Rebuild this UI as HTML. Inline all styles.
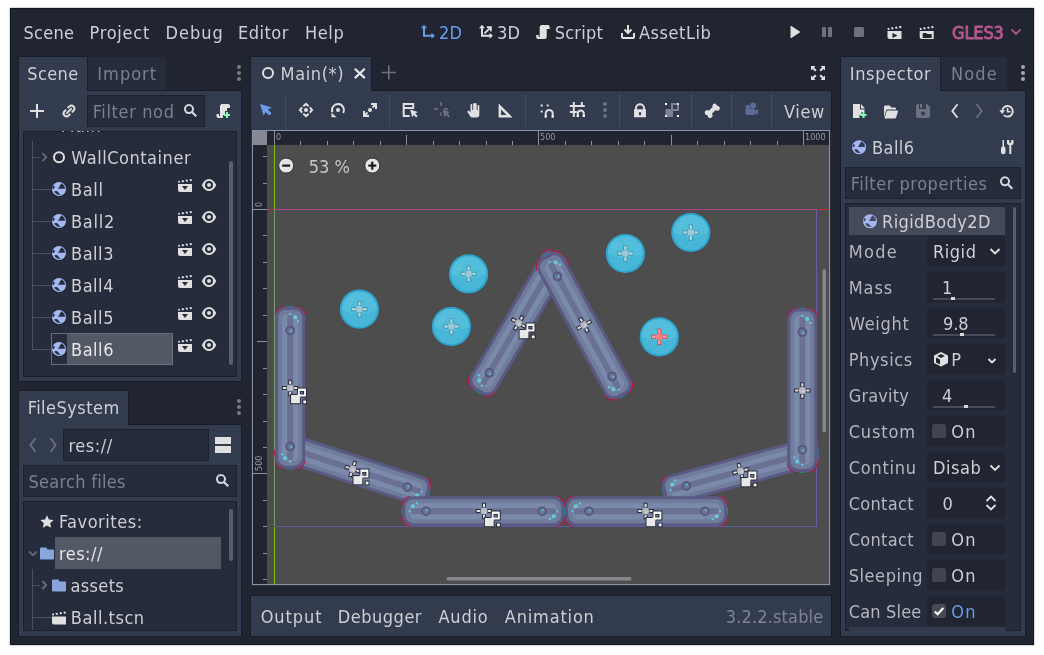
<!DOCTYPE html>
<html><head><meta charset="utf-8"><title>Godot Engine - Main</title>
<style>
html,body{margin:0;padding:0;background:#fff;}
body{width:1044px;height:655px;position:relative;overflow:hidden;font-family:"DejaVu Sans Condensed","DejaVu Sans","Liberation Sans",sans-serif;font-stretch:condensed;}
div,span.t,svg{position:absolute;}
span.t{white-space:pre;line-height:24px;height:24px;}
</style></head><body>
<div id="root" style="left:0;top:0;width:1044px;height:655px;will-change:transform;">
<div style="left:10px;top:8px;width:1024px;height:637px;background:#202531;box-shadow:0 0 1.5px rgba(10,12,20,.55), inset 0 0 0 1px rgba(8,10,22,.55);"></div>
<span class="t" id="t0" style="left:23.5px;top:21.00px;font-size:18px;color:#cdcfd4;letter-spacing:0.300px;">Scene</span>
<span class="t" id="t1" style="left:89.5px;top:21.00px;font-size:18px;color:#cdcfd4;letter-spacing:0.750px;">Project</span>
<span class="t" id="t2" style="left:165.5px;top:21.00px;font-size:18px;color:#cdcfd4;letter-spacing:0.975px;">Debug</span>
<span class="t" id="t3" style="left:238px;top:21.00px;font-size:18px;color:#cdcfd4;letter-spacing:0.480px;">Editor</span>
<span class="t" id="t4" style="left:305px;top:21.00px;font-size:18px;color:#cdcfd4;letter-spacing:0.600px;">Help</span>
<span class="t" id="t5" style="left:439px;top:21.00px;font-size:18px;color:#699ce8;letter-spacing:0.120px;">2D</span>
<span class="t" id="t6" style="left:497px;top:21.00px;font-size:18px;color:#cdcfd4;letter-spacing:0.300px;">3D</span>
<span class="t" id="t7" style="left:554.8px;top:21.00px;font-size:18px;color:#cdcfd4;letter-spacing:0.192px;">Script</span>
<span class="t" id="t8" style="left:639px;top:21.00px;font-size:18px;color:#cdcfd4;letter-spacing:0.533px;">AssetLib</span>
<span class="t" id="t9" style="left:952px;top:21.00px;font-size:18px;color:#b3588b;letter-spacing:-0.129px;-webkit-text-stroke:0.9px #b3588b;">GLES3</span>
<div style="left:87px;top:57px;width:79px;height:34px;background:#262c3b;"></div>
<div style="left:19px;top:91px;width:222px;height:290px;background:#333b4f;box-shadow:0 0 0 1px rgba(10,12,20,.35);"></div>
<div style="left:19px;top:57px;width:68px;height:33px;background:#333b4f;box-shadow:-1px 0 0 rgba(10,12,20,.35),1px 0 0 rgba(10,12,20,.35),0 -1px 0 rgba(10,12,20,.35);"></div>
<div style="left:19px;top:90px;width:68px;height:3px;background:#333b4f;"></div>
<span class="t" id="t10" style="left:27.3px;top:62.00px;font-size:18px;color:#cdcfd4;letter-spacing:0.390px;">Scene</span>
<span class="t" id="t11" style="left:97.3px;top:62.00px;font-size:18px;color:#7b8090;letter-spacing:1.020px;">Import</span>
<div style="left:87px;top:95px;width:118px;height:32px;background:#262c3b;box-shadow:inset 0 0 0 1px rgba(20,24,34,.55);"></div>
<span class="t" id="t12" style="left:92.7px;top:100.00px;font-size:18px;color:#7b8090;letter-spacing:0.630px;">Filter nod</span>
<div style="left:23px;top:131px;width:214px;height:246px;background:#262c3b;box-shadow:inset 0 0 0 1px #1b1f2a;"></div>
<div style="left:51px;top:333px;width:122px;height:32px;background:#535865;box-shadow:inset 0 0 0 1px #6a6e7a;"></div>
<div style="left:52px;top:334px;width:15px;height:30px;background:#262c3b;"></div>
<span class="t" id="t13" style="left:71.3px;top:146.00px;font-size:18px;color:#cdcfd4;letter-spacing:0.526px;">WallContainer</span>
<span class="t" id="t14" style="left:71px;top:178.00px;font-size:18px;color:#cdcfd4;letter-spacing:0.660px;">Ball</span>
<span class="t" id="t15" style="left:71px;top:210.00px;font-size:18px;color:#cdcfd4;letter-spacing:0.750px;">Ball2</span>
<span class="t" id="t16" style="left:71px;top:242.00px;font-size:18px;color:#cdcfd4;letter-spacing:0.525px;">Ball3</span>
<span class="t" id="t17" style="left:71px;top:274.00px;font-size:18px;color:#cdcfd4;letter-spacing:0.525px;">Ball4</span>
<span class="t" id="t18" style="left:71px;top:306.00px;font-size:18px;color:#cdcfd4;letter-spacing:0.525px;">Ball5</span>
<span class="t" id="t19" style="left:71px;top:338.00px;font-size:18px;color:#e4e5e8;letter-spacing:0.525px;">Ball6</span>
<div style="left:229px;top:161px;width:4px;height:204px;background:#5b5f6b;border-radius:2px;"></div>
<div style="left:23px;top:131px;width:214px;height:1px;overflow:hidden;"><span class="t" style="left:37.500px;top:-17px;font-size:18px;color:#c3c5cb;letter-spacing:.5px;">Main</span></div>
<div style="left:32px;top:141px;width:1px;height:208px;background:#4a4f5d;"></div>
<div style="left:32px;top:157px;width:8px;height:1px;background:#4a4f5d;"></div>
<div style="left:32px;top:189px;width:20px;height:1px;background:#4a4f5d;"></div>
<div style="left:32px;top:221px;width:20px;height:1px;background:#4a4f5d;"></div>
<div style="left:32px;top:253px;width:20px;height:1px;background:#4a4f5d;"></div>
<div style="left:32px;top:285px;width:20px;height:1px;background:#4a4f5d;"></div>
<div style="left:32px;top:317px;width:20px;height:1px;background:#4a4f5d;"></div>
<div style="left:32px;top:349px;width:20px;height:1px;background:#4a4f5d;"></div>
<div style="left:19px;top:425px;width:222px;height:211px;background:#333b4f;box-shadow:0 0 0 1px rgba(10,12,20,.35);"></div>
<div style="left:19px;top:391px;width:109px;height:33px;background:#333b4f;box-shadow:-1px 0 0 rgba(10,12,20,.35),1px 0 0 rgba(10,12,20,.35),0 -1px 0 rgba(10,12,20,.35);"></div>
<div style="left:19px;top:424px;width:109px;height:3px;background:#333b4f;"></div>
<span class="t" id="t20" style="left:27.7px;top:396.00px;font-size:18px;color:#cdcfd4;letter-spacing:0.460px;">FileSystem</span>
<div style="left:63px;top:429px;width:146px;height:32px;background:#262c3b;box-shadow:inset 0 0 0 1px rgba(20,24,34,.55);"></div>
<span class="t" id="t21" style="left:68.5px;top:434.00px;font-size:18px;color:#cdcfd4;letter-spacing:0.516px;">res://</span>
<div style="left:23px;top:465px;width:214px;height:32px;background:#262c3b;box-shadow:inset 0 0 0 1px rgba(20,24,34,.55);"></div>
<span class="t" id="t22" style="left:28.5px;top:470.00px;font-size:18px;color:#7b8090;letter-spacing:0.285px;">Search files</span>
<div style="left:23px;top:501px;width:214px;height:130px;background:#262c3b;box-shadow:inset 0 0 0 1px #1b1f2a;"></div>
<div style="left:55px;top:537px;width:166px;height:32px;background:#535865;"></div>
<span class="t" id="t23" style="left:58.9px;top:510.00px;font-size:18px;color:#cdcfd4;letter-spacing:0.540px;">Favorites:</span>
<span class="t" id="t24" style="left:58.9px;top:542.00px;font-size:18px;color:#e4e5e8;letter-spacing:0.516px;">res://</span>
<span class="t" id="t25" style="left:70.4px;top:574.00px;font-size:18px;color:#cdcfd4;letter-spacing:0.372px;">assets</span>
<span class="t" id="t26" style="left:70.8px;top:606.00px;font-size:18px;color:#cdcfd4;letter-spacing:0.525px;">Ball.tscn</span>
<div style="left:229px;top:509px;width:4px;height:52px;background:#5b5f6b;border-radius:2px;"></div>
<div style="left:32px;top:569px;width:1px;height:61px;background:#4a4f5d;"></div>
<div style="left:32px;top:585px;width:8px;height:1px;background:#4a4f5d;"></div>
<div style="left:32px;top:617px;width:20px;height:1px;background:#4a4f5d;"></div>
<div style="left:251px;top:91px;width:580px;height:40px;background:#333b4f;box-shadow:0 0 0 1px rgba(10,12,20,.35);"></div>
<div style="left:251px;top:57px;width:120px;height:33px;background:#333b4f;box-shadow:-1px 0 0 rgba(10,12,20,.35),1px 0 0 rgba(10,12,20,.35),0 -1px 0 rgba(10,12,20,.35);"></div>
<div style="left:251px;top:90px;width:120px;height:3px;background:#333b4f;"></div>
<span class="t" id="t27" style="left:280.6px;top:62.00px;font-size:18px;color:#cdcfd4;letter-spacing:0.600px;">Main(*)</span>
<div style="left:285px;top:94px;width:1px;height:32px;background:#454c60;"></div>
<div style="left:389px;top:94px;width:1px;height:32px;background:#454c60;"></div>
<div style="left:525px;top:94px;width:1px;height:32px;background:#454c60;"></div>
<div style="left:619px;top:94px;width:1px;height:32px;background:#454c60;"></div>
<div style="left:691px;top:94px;width:1px;height:32px;background:#454c60;"></div>
<div style="left:731px;top:94px;width:1px;height:32px;background:#454c60;"></div>
<div style="left:771px;top:94px;width:1px;height:32px;background:#454c60;"></div>
<span class="t" id="t28" style="left:784px;top:99.50px;font-size:18px;color:#cdcfd4;letter-spacing:0.600px;">View</span>
<div style="left:251px;top:130px;width:580px;height:456px;background:#293040;"></div>
<div style="left:252px;top:130px;width:578px;height:455px;background:#8a91a3;"></div>
<div style="left:253px;top:131px;width:576px;height:453px;background:#4d4d4d;"></div>
<div style="left:253px;top:131px;width:576px;height:14px;background:#202531;"></div>
<div style="left:253px;top:131px;width:14px;height:453px;background:#202531;"></div>
<div style="left:253px;top:131px;width:14px;height:14px;background:#8e9096;"></div>
<svg style="left:253px;top:131px" width="576" height="453" viewBox="253 131 576 453">
<rect x="253" y="131" width="576" height="453" fill="#4d4d4d"/>
<rect x="267" y="209" width="7" height="1" fill="#b8323c"/>
<rect x="274" y="209" width="543" height="1" fill="#a5458f"/>
<rect x="817" y="209" width="12" height="1" fill="#b8323c"/>
<rect x="274" y="145" width="1" height="64" fill="#7cbf12"/>
<rect x="274" y="210" width="1" height="316" fill="#7a9f70"/>
<rect x="274" y="527" width="1" height="57" fill="#7cbf12"/>
<rect x="816" y="210" width="1" height="317" fill="#6a5ca8"/>
<rect x="275" y="526" width="542" height="1" fill="#5d5ba3"/>
<g transform="translate(352.6 469.1) rotate(18.15)">
<path d="M-80 -6A9 9 0 0 1 -71 -15M71 -15A9 9 0 0 1 80 -6M80 6A9 9 0 0 1 71 15M-71 15A9 9 0 0 1 -80 6" fill="none" stroke="#c4143f" stroke-width="1.1"/>
<path d="M-80.3 -3.500v7M80.3 -3.500v7" fill="none" stroke="#1e8a96" stroke-width="1"/>
<rect x="-80" y="-15" width="160" height="30" rx="11" fill="#5b5a85"/>
<rect x="-77" y="-12" width="154" height="24" rx="8" fill="#6f7c9c"/>
<rect x="-72.5" y="-8" width="145" height="16" rx="5" fill="#7b8aaa"/>
<rect x="-71.5" y="-3" width="143" height="6" rx="2" fill="#6a7193"/>
<circle cx="-56.3" cy="0" r="4.800" fill="#565680"/><circle cx="-56.3" cy="0" r="3" fill="#6a7696"/>
<rect x="-56.3" y="-2" width="1.600" height="2" fill="#5fd3e3" opacity=".8"/>
<circle cx="57.7" cy="0" r="4.800" fill="#565680"/><circle cx="57.7" cy="0" r="3" fill="#6a7696"/>
<rect x="57.7" y="-2" width="1.600" height="2" fill="#5fd3e3" opacity=".8"/>
<circle cx="-69.5" cy="-5" r="2" fill="#5fd3e3" opacity=".9"/><rect x="-66.5" y="-9" width="2" height="2" fill="#5fd3e3"/><rect x="-73.5" y="-1" width="1.600" height="2" fill="#5fd3e3"/>
<circle cx="69.5" cy="5" r="2" fill="#5fd3e3" opacity=".9"/><rect x="64.5" y="7" width="2" height="2" fill="#5fd3e3"/><rect x="72" y="-1" width="1.600" height="2" fill="#5fd3e3"/>
</g>
<g transform="translate(740.6 471.1) rotate(-15.2)">
<path d="M-80 -6A9 9 0 0 1 -71 -15M71 -15A9 9 0 0 1 80 -6M80 6A9 9 0 0 1 71 15M-71 15A9 9 0 0 1 -80 6" fill="none" stroke="#c4143f" stroke-width="1.1"/>
<path d="M-80.3 -3.500v7M80.3 -3.500v7" fill="none" stroke="#1e8a96" stroke-width="1"/>
<rect x="-80" y="-15" width="160" height="30" rx="11" fill="#5b5a85"/>
<rect x="-77" y="-12" width="154" height="24" rx="8" fill="#6f7c9c"/>
<rect x="-72.5" y="-8" width="145" height="16" rx="5" fill="#7b8aaa"/>
<rect x="-71.5" y="-3" width="143" height="6" rx="2" fill="#6a7193"/>
<circle cx="-56.3" cy="0" r="4.800" fill="#565680"/><circle cx="-56.3" cy="0" r="3" fill="#6a7696"/>
<rect x="-56.3" y="-2" width="1.600" height="2" fill="#5fd3e3" opacity=".8"/>
<circle cx="57.7" cy="0" r="4.800" fill="#565680"/><circle cx="57.7" cy="0" r="3" fill="#6a7696"/>
<rect x="57.7" y="-2" width="1.600" height="2" fill="#5fd3e3" opacity=".8"/>
<circle cx="-69.5" cy="-5" r="2" fill="#5fd3e3" opacity=".9"/><rect x="-66.5" y="-9" width="2" height="2" fill="#5fd3e3"/><rect x="-73.5" y="-1" width="1.600" height="2" fill="#5fd3e3"/>
<circle cx="69.5" cy="5" r="2" fill="#5fd3e3" opacity=".9"/><rect x="64.5" y="7" width="2" height="2" fill="#5fd3e3"/><rect x="72" y="-1" width="1.600" height="2" fill="#5fd3e3"/>
</g>
<g transform="translate(518.7 323) rotate(120.4)">
<path d="M-80 -6A9 9 0 0 1 -71 -15M71 -15A9 9 0 0 1 80 -6M80 6A9 9 0 0 1 71 15M-71 15A9 9 0 0 1 -80 6" fill="none" stroke="#c4143f" stroke-width="1.1"/>
<path d="M-80.3 -3.500v7M80.3 -3.500v7" fill="none" stroke="#1e8a96" stroke-width="1"/>
<rect x="-80" y="-15" width="160" height="30" rx="11" fill="#5b5a85"/>
<rect x="-77" y="-12" width="154" height="24" rx="8" fill="#6f7c9c"/>
<rect x="-72.5" y="-8" width="145" height="16" rx="5" fill="#7b8aaa"/>
<rect x="-71.5" y="-3" width="143" height="6" rx="2" fill="#6a7193"/>
<circle cx="-56.3" cy="0" r="4.800" fill="#565680"/><circle cx="-56.3" cy="0" r="3" fill="#6a7696"/>
<rect x="-56.3" y="-2" width="1.600" height="2" fill="#5fd3e3" opacity=".8"/>
<circle cx="57.7" cy="0" r="4.800" fill="#565680"/><circle cx="57.7" cy="0" r="3" fill="#6a7696"/>
<rect x="57.7" y="-2" width="1.600" height="2" fill="#5fd3e3" opacity=".8"/>
<circle cx="-69.5" cy="-5" r="2" fill="#5fd3e3" opacity=".9"/><rect x="-66.5" y="-9" width="2" height="2" fill="#5fd3e3"/><rect x="-73.5" y="-1" width="1.600" height="2" fill="#5fd3e3"/>
<circle cx="69.5" cy="5" r="2" fill="#5fd3e3" opacity=".9"/><rect x="64.5" y="7" width="2" height="2" fill="#5fd3e3"/><rect x="72" y="-1" width="1.600" height="2" fill="#5fd3e3"/>
</g>
<g transform="translate(584.4 325.8) rotate(61.4)">
<path d="M-80 -6A9 9 0 0 1 -71 -15M71 -15A9 9 0 0 1 80 -6M80 6A9 9 0 0 1 71 15M-71 15A9 9 0 0 1 -80 6" fill="none" stroke="#c4143f" stroke-width="1.1"/>
<path d="M-80.3 -3.500v7M80.3 -3.500v7" fill="none" stroke="#1e8a96" stroke-width="1"/>
<rect x="-80" y="-15" width="160" height="30" rx="11" fill="#5b5a85"/>
<rect x="-77" y="-12" width="154" height="24" rx="8" fill="#6f7c9c"/>
<rect x="-72.5" y="-8" width="145" height="16" rx="5" fill="#7b8aaa"/>
<rect x="-71.5" y="-3" width="143" height="6" rx="2" fill="#6a7193"/>
<circle cx="-56.3" cy="0" r="4.800" fill="#565680"/><circle cx="-56.3" cy="0" r="3" fill="#6a7696"/>
<rect x="-56.3" y="-2" width="1.600" height="2" fill="#5fd3e3" opacity=".8"/>
<circle cx="57.7" cy="0" r="4.800" fill="#565680"/><circle cx="57.7" cy="0" r="3" fill="#6a7696"/>
<rect x="57.7" y="-2" width="1.600" height="2" fill="#5fd3e3" opacity=".8"/>
<circle cx="-69.5" cy="-5" r="2" fill="#5fd3e3" opacity=".9"/><rect x="-66.5" y="-9" width="2" height="2" fill="#5fd3e3"/><rect x="-73.5" y="-1" width="1.600" height="2" fill="#5fd3e3"/>
<circle cx="69.5" cy="5" r="2" fill="#5fd3e3" opacity=".9"/><rect x="64.5" y="7" width="2" height="2" fill="#5fd3e3"/><rect x="72" y="-1" width="1.600" height="2" fill="#5fd3e3"/>
</g>
<g transform="translate(290.2 387.7) rotate(90)">
<path d="M-81 -6A9 9 0 0 1 -72 -15M72 -15A9 9 0 0 1 81 -6M81 6A9 9 0 0 1 72 15M-72 15A9 9 0 0 1 -81 6" fill="none" stroke="#c4143f" stroke-width="1.1"/>
<path d="M-81.3 -3.500v7M81.3 -3.500v7" fill="none" stroke="#1e8a96" stroke-width="1"/>
<rect x="-81" y="-15" width="162" height="30" rx="11" fill="#5b5a85"/>
<rect x="-78" y="-12" width="156" height="24" rx="8" fill="#6f7c9c"/>
<rect x="-73.5" y="-8" width="147" height="16" rx="5" fill="#7b8aaa"/>
<rect x="-72.5" y="-3" width="145" height="6" rx="2" fill="#6a7193"/>
<circle cx="-57.3" cy="0" r="4.800" fill="#565680"/><circle cx="-57.3" cy="0" r="3" fill="#6a7696"/>
<rect x="-57.3" y="-2" width="1.600" height="2" fill="#5fd3e3" opacity=".8"/>
<circle cx="58.7" cy="0" r="4.800" fill="#565680"/><circle cx="58.7" cy="0" r="3" fill="#6a7696"/>
<rect x="58.7" y="-2" width="1.600" height="2" fill="#5fd3e3" opacity=".8"/>
<circle cx="-70.5" cy="-5" r="2" fill="#5fd3e3" opacity=".9"/><rect x="-67.5" y="-9" width="2" height="2" fill="#5fd3e3"/><rect x="-74.5" y="-1" width="1.600" height="2" fill="#5fd3e3"/>
<circle cx="70.5" cy="5" r="2" fill="#5fd3e3" opacity=".9"/><rect x="65.5" y="7" width="2" height="2" fill="#5fd3e3"/><rect x="73" y="-1" width="1.600" height="2" fill="#5fd3e3"/>
</g>
<g transform="translate(802.3 390.2) rotate(90)">
<path d="M-81.75 -6A9 9 0 0 1 -72.75 -15M72.75 -15A9 9 0 0 1 81.75 -6M81.75 6A9 9 0 0 1 72.75 15M-72.75 15A9 9 0 0 1 -81.75 6" fill="none" stroke="#c4143f" stroke-width="1.1"/>
<path d="M-82.05 -3.500v7M82.05 -3.500v7" fill="none" stroke="#1e8a96" stroke-width="1"/>
<rect x="-81.75" y="-15" width="163.5" height="30" rx="11" fill="#5b5a85"/>
<rect x="-78.75" y="-12" width="157.5" height="24" rx="8" fill="#6f7c9c"/>
<rect x="-74.25" y="-8" width="148.5" height="16" rx="5" fill="#7b8aaa"/>
<rect x="-73.25" y="-3" width="146.5" height="6" rx="2" fill="#6a7193"/>
<circle cx="-58.05" cy="0" r="4.800" fill="#565680"/><circle cx="-58.05" cy="0" r="3" fill="#6a7696"/>
<rect x="-58.05" y="-2" width="1.600" height="2" fill="#5fd3e3" opacity=".8"/>
<circle cx="59.45" cy="0" r="4.800" fill="#565680"/><circle cx="59.45" cy="0" r="3" fill="#6a7696"/>
<rect x="59.45" y="-2" width="1.600" height="2" fill="#5fd3e3" opacity=".8"/>
<circle cx="-71.25" cy="-5" r="2" fill="#5fd3e3" opacity=".9"/><rect x="-68.25" y="-9" width="2" height="2" fill="#5fd3e3"/><rect x="-75.25" y="-1" width="1.600" height="2" fill="#5fd3e3"/>
<circle cx="71.25" cy="5" r="2" fill="#5fd3e3" opacity=".9"/><rect x="66.25" y="7" width="2" height="2" fill="#5fd3e3"/><rect x="73.75" y="-1" width="1.600" height="2" fill="#5fd3e3"/>
</g>
<g transform="translate(483.3 511.2) rotate(0)">
<path d="M-81 -6A9 9 0 0 1 -72 -15M72 -15A9 9 0 0 1 81 -6M81 6A9 9 0 0 1 72 15M-72 15A9 9 0 0 1 -81 6" fill="none" stroke="#c4143f" stroke-width="1.1"/>
<path d="M-81.3 -3.500v7M81.3 -3.500v7" fill="none" stroke="#1e8a96" stroke-width="1"/>
<rect x="-81" y="-15" width="162" height="30" rx="11" fill="#5b5a85"/>
<rect x="-78" y="-12" width="156" height="24" rx="8" fill="#6f7c9c"/>
<rect x="-73.5" y="-8" width="147" height="16" rx="5" fill="#7b8aaa"/>
<rect x="-72.5" y="-3" width="145" height="6" rx="2" fill="#6a7193"/>
<circle cx="-57.3" cy="0" r="4.800" fill="#565680"/><circle cx="-57.3" cy="0" r="3" fill="#6a7696"/>
<rect x="-57.3" y="-2" width="1.600" height="2" fill="#5fd3e3" opacity=".8"/>
<circle cx="58.7" cy="0" r="4.800" fill="#565680"/><circle cx="58.7" cy="0" r="3" fill="#6a7696"/>
<rect x="58.7" y="-2" width="1.600" height="2" fill="#5fd3e3" opacity=".8"/>
<circle cx="-70.5" cy="-5" r="2" fill="#5fd3e3" opacity=".9"/><rect x="-67.5" y="-9" width="2" height="2" fill="#5fd3e3"/><rect x="-74.5" y="-1" width="1.600" height="2" fill="#5fd3e3"/>
<circle cx="70.5" cy="5" r="2" fill="#5fd3e3" opacity=".9"/><rect x="65.5" y="7" width="2" height="2" fill="#5fd3e3"/><rect x="73" y="-1" width="1.600" height="2" fill="#5fd3e3"/>
</g>
<g transform="translate(646.2 511.2) rotate(0)">
<path d="M-81 -6A9 9 0 0 1 -72 -15M72 -15A9 9 0 0 1 81 -6M81 6A9 9 0 0 1 72 15M-72 15A9 9 0 0 1 -81 6" fill="none" stroke="#c4143f" stroke-width="1.1"/>
<path d="M-81.3 -3.500v7M81.3 -3.500v7" fill="none" stroke="#1e8a96" stroke-width="1"/>
<rect x="-81" y="-15" width="162" height="30" rx="11" fill="#5b5a85"/>
<rect x="-78" y="-12" width="156" height="24" rx="8" fill="#6f7c9c"/>
<rect x="-73.5" y="-8" width="147" height="16" rx="5" fill="#7b8aaa"/>
<rect x="-72.5" y="-3" width="145" height="6" rx="2" fill="#6a7193"/>
<circle cx="-57.3" cy="0" r="4.800" fill="#565680"/><circle cx="-57.3" cy="0" r="3" fill="#6a7696"/>
<rect x="-57.3" y="-2" width="1.600" height="2" fill="#5fd3e3" opacity=".8"/>
<circle cx="58.7" cy="0" r="4.800" fill="#565680"/><circle cx="58.7" cy="0" r="3" fill="#6a7696"/>
<rect x="58.7" y="-2" width="1.600" height="2" fill="#5fd3e3" opacity=".8"/>
<circle cx="-70.5" cy="-5" r="2" fill="#5fd3e3" opacity=".9"/><rect x="-67.5" y="-9" width="2" height="2" fill="#5fd3e3"/><rect x="-74.5" y="-1" width="1.600" height="2" fill="#5fd3e3"/>
<circle cx="70.5" cy="5" r="2" fill="#5fd3e3" opacity=".9"/><rect x="65.5" y="7" width="2" height="2" fill="#5fd3e3"/><rect x="73" y="-1" width="1.600" height="2" fill="#5fd3e3"/>
</g>
<circle cx="359.4" cy="309.2" r="19.6" fill="#2ea5cf"/>
<circle cx="359.4" cy="309.2" r="17.6" fill="#48b7d7"/>
<path d="M341.79999999999995 309.2a17.6 17.6 0 0 1 35.2 0a40 40 0 0 1 -35.2 0z" fill="#53bedb"/>
<g transform="translate(359.4 309.2)" stroke="#3f93ad" stroke-width=".9">
<rect x="-1.700" y="-7.800" width="3.400" height="4.600" fill="#a8d5df"/><rect x="-1.700" y="3.200" width="3.400" height="4.600" fill="#a8d5df"/>
<rect x="-7.800" y="-1.700" width="4.600" height="3.400" fill="#a8d5df"/><rect x="3.200" y="-1.700" width="4.600" height="3.400" fill="#a8d5df"/>
<circle r="3.300" fill="#9ccad6" stroke="none"/></g>
<g fill="#8fd8ea" opacity=".7"><rect x="348.4" y="300.2" width=".8" height=".8"/><rect x="350.4" y="299.2" width=".8" height=".8"/><rect x="352.4" y="298.7" width=".8" height=".8"/><rect x="347.4" y="303.2" width=".8" height=".8"/><rect x="349.4" y="302.2" width=".8" height=".8"/><rect x="351.4" y="301.2" width=".8" height=".8"/><rect x="346.9" y="305.7" width=".8" height=".8"/><rect x="348.9" y="304.7" width=".8" height=".8"/><rect x="350.4" y="303.2" width=".8" height=".8"/></g>
<circle cx="468.6" cy="273.9" r="19.6" fill="#2ea5cf"/>
<circle cx="468.6" cy="273.9" r="17.6" fill="#48b7d7"/>
<path d="M451.0 273.9a17.6 17.6 0 0 1 35.2 0a40 40 0 0 1 -35.2 0z" fill="#53bedb"/>
<g transform="translate(468.6 273.9)" stroke="#3f93ad" stroke-width=".9">
<rect x="-1.700" y="-7.800" width="3.400" height="4.600" fill="#a8d5df"/><rect x="-1.700" y="3.200" width="3.400" height="4.600" fill="#a8d5df"/>
<rect x="-7.800" y="-1.700" width="4.600" height="3.400" fill="#a8d5df"/><rect x="3.200" y="-1.700" width="4.600" height="3.400" fill="#a8d5df"/>
<circle r="3.300" fill="#9ccad6" stroke="none"/></g>
<g fill="#8fd8ea" opacity=".7"><rect x="457.6" y="264.9" width=".8" height=".8"/><rect x="459.6" y="263.9" width=".8" height=".8"/><rect x="461.6" y="263.4" width=".8" height=".8"/><rect x="456.6" y="267.9" width=".8" height=".8"/><rect x="458.6" y="266.9" width=".8" height=".8"/><rect x="460.6" y="265.9" width=".8" height=".8"/><rect x="456.1" y="270.4" width=".8" height=".8"/><rect x="458.1" y="269.4" width=".8" height=".8"/><rect x="459.6" y="267.9" width=".8" height=".8"/></g>
<circle cx="451.4" cy="326.5" r="19.6" fill="#2ea5cf"/>
<circle cx="451.4" cy="326.5" r="17.6" fill="#48b7d7"/>
<path d="M433.79999999999995 326.5a17.6 17.6 0 0 1 35.2 0a40 40 0 0 1 -35.2 0z" fill="#53bedb"/>
<g transform="translate(451.4 326.5)" stroke="#3f93ad" stroke-width=".9">
<rect x="-1.700" y="-7.800" width="3.400" height="4.600" fill="#a8d5df"/><rect x="-1.700" y="3.200" width="3.400" height="4.600" fill="#a8d5df"/>
<rect x="-7.800" y="-1.700" width="4.600" height="3.400" fill="#a8d5df"/><rect x="3.200" y="-1.700" width="4.600" height="3.400" fill="#a8d5df"/>
<circle r="3.300" fill="#9ccad6" stroke="none"/></g>
<g fill="#8fd8ea" opacity=".7"><rect x="440.4" y="317.5" width=".8" height=".8"/><rect x="442.4" y="316.5" width=".8" height=".8"/><rect x="444.4" y="316.0" width=".8" height=".8"/><rect x="439.4" y="320.5" width=".8" height=".8"/><rect x="441.4" y="319.5" width=".8" height=".8"/><rect x="443.4" y="318.5" width=".8" height=".8"/><rect x="438.9" y="323.0" width=".8" height=".8"/><rect x="440.9" y="322.0" width=".8" height=".8"/><rect x="442.4" y="320.5" width=".8" height=".8"/></g>
<circle cx="625.4" cy="253.5" r="19.6" fill="#2ea5cf"/>
<circle cx="625.4" cy="253.5" r="17.6" fill="#48b7d7"/>
<path d="M607.8 253.5a17.6 17.6 0 0 1 35.2 0a40 40 0 0 1 -35.2 0z" fill="#53bedb"/>
<g transform="translate(625.4 253.5)" stroke="#3f93ad" stroke-width=".9">
<rect x="-1.700" y="-7.800" width="3.400" height="4.600" fill="#a8d5df"/><rect x="-1.700" y="3.200" width="3.400" height="4.600" fill="#a8d5df"/>
<rect x="-7.800" y="-1.700" width="4.600" height="3.400" fill="#a8d5df"/><rect x="3.200" y="-1.700" width="4.600" height="3.400" fill="#a8d5df"/>
<circle r="3.300" fill="#9ccad6" stroke="none"/></g>
<g fill="#8fd8ea" opacity=".7"><rect x="614.4" y="244.5" width=".8" height=".8"/><rect x="616.4" y="243.5" width=".8" height=".8"/><rect x="618.4" y="243.0" width=".8" height=".8"/><rect x="613.4" y="247.5" width=".8" height=".8"/><rect x="615.4" y="246.5" width=".8" height=".8"/><rect x="617.4" y="245.5" width=".8" height=".8"/><rect x="612.9" y="250.0" width=".8" height=".8"/><rect x="614.9" y="249.0" width=".8" height=".8"/><rect x="616.4" y="247.5" width=".8" height=".8"/></g>
<circle cx="690.8" cy="232.5" r="19.6" fill="#2ea5cf"/>
<circle cx="690.8" cy="232.5" r="17.6" fill="#48b7d7"/>
<path d="M673.1999999999999 232.5a17.6 17.6 0 0 1 35.2 0a40 40 0 0 1 -35.2 0z" fill="#53bedb"/>
<g transform="translate(690.8 232.5)" stroke="#3f93ad" stroke-width=".9">
<rect x="-1.700" y="-7.800" width="3.400" height="4.600" fill="#a8d5df"/><rect x="-1.700" y="3.200" width="3.400" height="4.600" fill="#a8d5df"/>
<rect x="-7.800" y="-1.700" width="4.600" height="3.400" fill="#a8d5df"/><rect x="3.200" y="-1.700" width="4.600" height="3.400" fill="#a8d5df"/>
<circle r="3.300" fill="#9ccad6" stroke="none"/></g>
<g fill="#8fd8ea" opacity=".7"><rect x="679.8" y="223.5" width=".8" height=".8"/><rect x="681.8" y="222.5" width=".8" height=".8"/><rect x="683.8" y="222.0" width=".8" height=".8"/><rect x="678.8" y="226.5" width=".8" height=".8"/><rect x="680.8" y="225.5" width=".8" height=".8"/><rect x="682.8" y="224.5" width=".8" height=".8"/><rect x="678.3" y="229.0" width=".8" height=".8"/><rect x="680.3" y="228.0" width=".8" height=".8"/><rect x="681.8" y="226.5" width=".8" height=".8"/></g>
<circle cx="659.3" cy="336.8" r="19.6" fill="#2ea5cf"/>
<circle cx="659.3" cy="336.8" r="17.6" fill="#48b7d7"/>
<path d="M641.6999999999999 336.8a17.6 17.6 0 0 1 35.2 0a40 40 0 0 1 -35.2 0z" fill="#53bedb"/>
<g transform="translate(659.3 336.8)" stroke="#d04a55" stroke-width=".9">
<rect x="-1.700" y="-7.800" width="3.400" height="4.600" fill="#ffa2a2"/><rect x="-1.700" y="3.200" width="3.400" height="4.600" fill="#ffa2a2"/>
<rect x="-7.800" y="-1.700" width="4.600" height="3.400" fill="#ffa2a2"/><rect x="3.200" y="-1.700" width="4.600" height="3.400" fill="#ffa2a2"/>
<circle r="3.300" fill="#ff8080" stroke="none"/></g>
<g transform="translate(290.2 388) rotate(0)">
<path d="M-2 -8.300h4v5h-4zM-2 3.300h4v5h-4zM-8.300 -2h5v4h-5zM3.300 -2h5v4h-5z" fill="#2a2e3b"/>
<path d="M-1 -7.300h2v3.300h-2zM-1 4h2v3.300h-2zM-7.300 -1h3.300v2h-3.300zM4 -1h3.300v2H4z" fill="#e2e2e2"/>
<circle r="3.500" fill="#b4b7c2"/><circle cx=".800" cy=".800" r="1.500" fill="#c9cbd3"/></g>
<g transform="translate(290.8 388)">
<path d="M6.200 -.500h10v10h-10z M10 4v1.600h2.200V4z M-.700 6h10.800v10.200H-.700z M11.500 11.500h4.800v4.800h-4.800z" fill="#2a2e3b" fill-rule="evenodd"/>
<path d="M7.200 .500h8v8h-8z M9 3v3.600h4.200V3z" fill="#f4f4f4" fill-rule="evenodd"/>
<rect x=".300" y="7" width="8.800" height="8.200" fill="#e8e8e8"/><rect x="12.500" y="12.500" width="2.800" height="2.800" fill="#f4f4f4"/>
</g>
<g transform="translate(352.6 469.1) rotate(18)">
<path d="M-2 -8.300h4v5h-4zM-2 3.300h4v5h-4zM-8.300 -2h5v4h-5zM3.300 -2h5v4h-5z" fill="#2a2e3b"/>
<path d="M-1 -7.300h2v3.300h-2zM-1 4h2v3.300h-2zM-7.300 -1h3.300v2h-3.300zM4 -1h3.300v2H4z" fill="#e2e2e2"/>
<circle r="3.500" fill="#b4b7c2"/><circle cx=".800" cy=".800" r="1.500" fill="#c9cbd3"/></g>
<g transform="translate(353.20000000000005 469.1)">
<path d="M6.200 -.500h10v10h-10z M10 4v1.600h2.200V4z M-.700 6h10.800v10.200H-.700z M11.500 11.500h4.800v4.800h-4.800z" fill="#2a2e3b" fill-rule="evenodd"/>
<path d="M7.200 .500h8v8h-8z M9 3v3.600h4.200V3z" fill="#f4f4f4" fill-rule="evenodd"/>
<rect x=".300" y="7" width="8.800" height="8.200" fill="#e8e8e8"/><rect x="12.500" y="12.500" width="2.800" height="2.800" fill="#f4f4f4"/>
</g>
<g transform="translate(484 511) rotate(0)">
<path d="M-2 -8.300h4v5h-4zM-2 3.300h4v5h-4zM-8.300 -2h5v4h-5zM3.300 -2h5v4h-5z" fill="#2a2e3b"/>
<path d="M-1 -7.300h2v3.300h-2zM-1 4h2v3.300h-2zM-7.300 -1h3.300v2h-3.300zM4 -1h3.300v2H4z" fill="#e2e2e2"/>
<circle r="3.500" fill="#b4b7c2"/><circle cx=".800" cy=".800" r="1.500" fill="#c9cbd3"/></g>
<g transform="translate(484.6 511)">
<path d="M6.200 -.500h10v10h-10z M10 4v1.600h2.200V4z M-.700 6h10.800v10.200H-.700z M11.500 11.500h4.800v4.800h-4.800z" fill="#2a2e3b" fill-rule="evenodd"/>
<path d="M7.200 .500h8v8h-8z M9 3v3.600h4.200V3z" fill="#f4f4f4" fill-rule="evenodd"/>
<rect x=".300" y="7" width="8.800" height="8.200" fill="#e8e8e8"/><rect x="12.500" y="12.500" width="2.800" height="2.800" fill="#f4f4f4"/>
</g>
<g transform="translate(645.6 511) rotate(0)">
<path d="M-2 -8.300h4v5h-4zM-2 3.300h4v5h-4zM-8.300 -2h5v4h-5zM3.300 -2h5v4h-5z" fill="#2a2e3b"/>
<path d="M-1 -7.300h2v3.300h-2zM-1 4h2v3.300h-2zM-7.300 -1h3.300v2h-3.300zM4 -1h3.300v2H4z" fill="#e2e2e2"/>
<circle r="3.500" fill="#b4b7c2"/><circle cx=".800" cy=".800" r="1.500" fill="#c9cbd3"/></g>
<g transform="translate(646.2 511)">
<path d="M6.200 -.500h10v10h-10z M10 4v1.600h2.200V4z M-.700 6h10.800v10.200H-.700z M11.500 11.500h4.800v4.800h-4.800z" fill="#2a2e3b" fill-rule="evenodd"/>
<path d="M7.200 .500h8v8h-8z M9 3v3.600h4.200V3z" fill="#f4f4f4" fill-rule="evenodd"/>
<rect x=".300" y="7" width="8.800" height="8.200" fill="#e8e8e8"/><rect x="12.500" y="12.500" width="2.800" height="2.800" fill="#f4f4f4"/>
</g>
<g transform="translate(740.6 471.1) rotate(-15)">
<path d="M-2 -8.300h4v5h-4zM-2 3.300h4v5h-4zM-8.300 -2h5v4h-5zM3.300 -2h5v4h-5z" fill="#2a2e3b"/>
<path d="M-1 -7.300h2v3.300h-2zM-1 4h2v3.300h-2zM-7.300 -1h3.300v2h-3.300zM4 -1h3.300v2H4z" fill="#e2e2e2"/>
<circle r="3.500" fill="#b4b7c2"/><circle cx=".800" cy=".800" r="1.500" fill="#c9cbd3"/></g>
<g transform="translate(741.2 471.1)">
<path d="M6.200 -.500h10v10h-10z M10 4v1.600h2.200V4z M-.700 6h10.800v10.200H-.700z M11.500 11.500h4.800v4.800h-4.800z" fill="#2a2e3b" fill-rule="evenodd"/>
<path d="M7.200 .500h8v8h-8z M9 3v3.600h4.200V3z" fill="#f4f4f4" fill-rule="evenodd"/>
<rect x=".300" y="7" width="8.800" height="8.200" fill="#e8e8e8"/><rect x="12.500" y="12.500" width="2.800" height="2.800" fill="#f4f4f4"/>
</g>
<g transform="translate(802.3 390.5) rotate(0)">
<path d="M-2 -8.300h4v5h-4zM-2 3.300h4v5h-4zM-8.300 -2h5v4h-5zM3.300 -2h5v4h-5z" fill="#2a2e3b"/>
<path d="M-1 -7.300h2v3.300h-2zM-1 4h2v3.300h-2zM-7.300 -1h3.300v2h-3.300zM4 -1h3.300v2H4z" fill="#e2e2e2"/>
<circle r="3.500" fill="#b4b7c2"/><circle cx=".800" cy=".800" r="1.500" fill="#c9cbd3"/></g>
<g transform="translate(518.7 323) rotate(30)">
<path d="M-2 -8.300h4v5h-4zM-2 3.300h4v5h-4zM-8.300 -2h5v4h-5zM3.300 -2h5v4h-5z" fill="#2a2e3b"/>
<path d="M-1 -7.300h2v3.300h-2zM-1 4h2v3.300h-2zM-7.300 -1h3.300v2h-3.300zM4 -1h3.300v2H4z" fill="#e2e2e2"/>
<circle r="3.500" fill="#b4b7c2"/><circle cx=".800" cy=".800" r="1.500" fill="#c9cbd3"/></g>
<g transform="translate(519.3000000000001 323)">
<path d="M6.200 -.500h10v10h-10z M10 4v1.600h2.200V4z M-.700 6h10.800v10.200H-.700z M11.500 11.500h4.800v4.800h-4.800z" fill="#2a2e3b" fill-rule="evenodd"/>
<path d="M7.200 .500h8v8h-8z M9 3v3.600h4.200V3z" fill="#f4f4f4" fill-rule="evenodd"/>
<rect x=".300" y="7" width="8.800" height="8.200" fill="#e8e8e8"/><rect x="12.500" y="12.500" width="2.800" height="2.800" fill="#f4f4f4"/>
</g>
<g transform="translate(584 325) rotate(-29)">
<path d="M-2 -8.300h4v5h-4zM-2 3.300h4v5h-4zM-8.300 -2h5v4h-5zM3.300 -2h5v4h-5z" fill="#2a2e3b"/>
<path d="M-1 -7.300h2v3.300h-2zM-1 4h2v3.300h-2zM-7.300 -1h3.300v2h-3.300zM4 -1h3.300v2H4z" fill="#e2e2e2"/>
<circle r="3.500" fill="#b4b7c2"/><circle cx=".800" cy=".800" r="1.500" fill="#c9cbd3"/></g>
<rect x="822.500" y="269" width="3.500" height="163.500" rx="1.7" fill="#85878d"/>
<rect x="446.5" y="577" width="185" height="3.5" rx="1.7" fill="#85878d"/>
<rect x="253" y="131" width="576" height="14" fill="#202531"/>
<rect x="253" y="131" width="14" height="453" fill="#202531"/>
<rect x="253" y="131" width="14" height="14" fill="#858893"/>
<rect x="274" y="131" width="1" height="14" fill="#8d909a"/>
<text x="276" y="140.2" font-size="9" fill="#979aa4" font-family="'DejaVu Sans Condensed','DejaVu Sans','Liberation Sans',sans-serif" font-stretch="condensed">0</text>
<rect x="300" y="141" width="1" height="4" fill="#8d909a"/>
<rect x="327" y="141" width="1" height="4" fill="#8d909a"/>
<rect x="353" y="141" width="1" height="4" fill="#8d909a"/>
<rect x="380" y="141" width="1" height="4" fill="#8d909a"/>
<rect x="406" y="135" width="1" height="10" fill="#8d909a"/>
<rect x="433" y="141" width="1" height="4" fill="#8d909a"/>
<rect x="459" y="141" width="1" height="4" fill="#8d909a"/>
<rect x="486" y="141" width="1" height="4" fill="#8d909a"/>
<rect x="512" y="141" width="1" height="4" fill="#8d909a"/>
<rect x="538" y="131" width="1" height="14" fill="#8d909a"/>
<text x="540" y="140.2" font-size="9" fill="#979aa4" font-family="'DejaVu Sans Condensed','DejaVu Sans','Liberation Sans',sans-serif" font-stretch="condensed">500</text>
<rect x="565" y="141" width="1" height="4" fill="#8d909a"/>
<rect x="591" y="141" width="1" height="4" fill="#8d909a"/>
<rect x="618" y="141" width="1" height="4" fill="#8d909a"/>
<rect x="644" y="141" width="1" height="4" fill="#8d909a"/>
<rect x="671" y="135" width="1" height="10" fill="#8d909a"/>
<rect x="697" y="141" width="1" height="4" fill="#8d909a"/>
<rect x="724" y="141" width="1" height="4" fill="#8d909a"/>
<rect x="750" y="141" width="1" height="4" fill="#8d909a"/>
<rect x="777" y="141" width="1" height="4" fill="#8d909a"/>
<rect x="803" y="131" width="1" height="14" fill="#8d909a"/>
<text x="805" y="140.2" font-size="9" fill="#979aa4" font-family="'DejaVu Sans Condensed','DejaVu Sans','Liberation Sans',sans-serif" font-stretch="condensed">1000</text>
<rect x="263" y="156" width="4" height="1" fill="#8d909a"/>
<rect x="263" y="183" width="4" height="1" fill="#8d909a"/>
<rect x="253" y="209" width="14" height="1" fill="#8d909a"/>
<text transform="translate(262.2 207) rotate(-90)" font-size="9" fill="#979aa4" font-family="'DejaVu Sans Condensed','DejaVu Sans','Liberation Sans',sans-serif" font-stretch="condensed">0</text>
<rect x="263" y="235" width="4" height="1" fill="#8d909a"/>
<rect x="263" y="262" width="4" height="1" fill="#8d909a"/>
<rect x="263" y="288" width="4" height="1" fill="#8d909a"/>
<rect x="263" y="315" width="4" height="1" fill="#8d909a"/>
<rect x="257" y="341" width="10" height="1" fill="#8d909a"/>
<rect x="263" y="368" width="4" height="1" fill="#8d909a"/>
<rect x="263" y="394" width="4" height="1" fill="#8d909a"/>
<rect x="263" y="421" width="4" height="1" fill="#8d909a"/>
<rect x="263" y="447" width="4" height="1" fill="#8d909a"/>
<rect x="253" y="473" width="14" height="1" fill="#8d909a"/>
<text transform="translate(262.2 471) rotate(-90)" font-size="9" fill="#979aa4" font-family="'DejaVu Sans Condensed','DejaVu Sans','Liberation Sans',sans-serif" font-stretch="condensed">500</text>
<rect x="263" y="500" width="4" height="1" fill="#8d909a"/>
<rect x="263" y="526" width="4" height="1" fill="#8d909a"/>
<rect x="263" y="553" width="4" height="1" fill="#8d909a"/>
<rect x="263" y="579" width="4" height="1" fill="#8d909a"/>
<circle cx="286.2" cy="165.6" r="7.5" fill="#e6e6e6" stroke="#2a2e3b" stroke-width="1"/>
<rect x="282.2" y="164.5" width="8" height="2.2" fill="#1c1c1c"/>
<circle cx="372.3" cy="165.6" r="7.5" fill="#e6e6e6" stroke="#2a2e3b" stroke-width="1"/>
<rect x="368.3" y="164.5" width="8" height="2.2" fill="#1c1c1c"/>
<rect x="371.2" y="161.6" width="2.2" height="8" fill="#1c1c1c"/>
</svg>
<span class="t" id="t29" style="left:308.8px;top:155.00px;font-size:18px;color:#c8c8c8;letter-spacing:0.000px;">53 %</span>
<div style="left:251px;top:596px;width:580px;height:40px;background:#333b4f;box-shadow:0 0 0 1px rgba(10,12,20,.35);"></div>
<span class="t" id="t30" style="left:260.7px;top:605.00px;font-size:18px;color:#cdcfd4;letter-spacing:0.912px;">Output</span>
<span class="t" id="t31" style="left:337.8px;top:605.00px;font-size:18px;color:#cdcfd4;letter-spacing:0.505px;">Debugger</span>
<span class="t" id="t32" style="left:438.4px;top:605.00px;font-size:18px;color:#cdcfd4;letter-spacing:0.837px;">Audio</span>
<span class="t" id="t33" style="left:504.8px;top:605.00px;font-size:18px;color:#cdcfd4;letter-spacing:0.815px;">Animation</span>
<span class="t" id="t34" style="left:725.8px;top:605.00px;font-size:18px;color:#7e8494;letter-spacing:0.151px;">3.2.2.stable</span>
<div style="left:940px;top:57px;width:67px;height:34px;background:#262c3b;"></div>
<div style="left:841px;top:91px;width:184px;height:545px;background:#333b4f;box-shadow:0 0 0 1px rgba(10,12,20,.35);"></div>
<div style="left:841px;top:57px;width:99px;height:33px;background:#333b4f;box-shadow:-1px 0 0 rgba(10,12,20,.35),1px 0 0 rgba(10,12,20,.35),0 -1px 0 rgba(10,12,20,.35);"></div>
<div style="left:841px;top:90px;width:99px;height:3px;background:#333b4f;"></div>
<span class="t" id="t35" style="left:849.7px;top:62.00px;font-size:18px;color:#cdcfd4;letter-spacing:0.684px;">Inspector</span>
<span class="t" id="t36" style="left:951px;top:62.00px;font-size:18px;color:#7b8090;letter-spacing:1.140px;">Node</span>
<span class="t" id="t37" style="left:872px;top:136.00px;font-size:18px;color:#cdcfd4;letter-spacing:0.435px;">Ball6</span>
<div style="left:845px;top:167px;width:176px;height:32px;background:#262c3b;box-shadow:inset 0 0 0 1px rgba(20,24,34,.55);"></div>
<span class="t" id="t38" style="left:850.7px;top:172.00px;font-size:18px;color:#7b8090;letter-spacing:0.535px;">Filter properties</span>
<div style="left:845px;top:203px;width:176px;height:428px;background:#262c3b;box-shadow:inset 0 0 0 1px #1b1f2a;"></div>
<div style="left:849px;top:207px;width:156px;height:28px;background:#454a5b;"></div>
<span class="t" id="t39" style="left:882px;top:210.00px;font-size:18px;color:#cdcfd4;letter-spacing:0.390px;">RigidBody2D</span>
<div style="left:927px;top:235px;width:78px;height:32px;background:#232936;"></div>
<div style="left:927px;top:236px;width:78px;height:30px;background:#202531;"></div>
<span class="t" id="t40" style="left:848.7px;top:240.00px;font-size:18px;color:#b4b7bf;letter-spacing:1.300px;">Mode</span>
<div style="left:927px;top:271px;width:78px;height:32px;background:#232936;"></div>
<div style="left:927px;top:272px;width:78px;height:30px;background:#202531;"></div>
<span class="t" id="t41" style="left:848.7px;top:276.00px;font-size:18px;color:#b4b7bf;letter-spacing:0.900px;">Mass</span>
<div style="left:927px;top:307px;width:78px;height:32px;background:#232936;"></div>
<div style="left:927px;top:308px;width:78px;height:30px;background:#202531;"></div>
<span class="t" id="t42" style="left:849px;top:312.00px;font-size:18px;color:#b4b7bf;letter-spacing:0.696px;">Weight</span>
<div style="left:927px;top:343px;width:78px;height:32px;background:#232936;"></div>
<div style="left:927px;top:344px;width:78px;height:30px;background:#202531;"></div>
<span class="t" id="t43" style="left:848.7px;top:348.00px;font-size:18px;color:#b4b7bf;letter-spacing:0.600px;">Physics</span>
<div style="left:927px;top:379px;width:78px;height:32px;background:#232936;"></div>
<div style="left:927px;top:380px;width:78px;height:30px;background:#202531;"></div>
<span class="t" id="t44" style="left:848.7px;top:384.00px;font-size:18px;color:#b4b7bf;letter-spacing:0.150px;">Gravity</span>
<div style="left:927px;top:415px;width:78px;height:32px;background:#232936;"></div>
<div style="left:927px;top:416px;width:78px;height:30px;background:#202531;"></div>
<span class="t" id="t45" style="left:848.7px;top:420.00px;font-size:18px;color:#b4b7bf;letter-spacing:0.840px;">Custom</span>
<div style="left:927px;top:451px;width:78px;height:32px;background:#232936;"></div>
<div style="left:927px;top:452px;width:78px;height:30px;background:#202531;"></div>
<span class="t" id="t46" style="left:848.7px;top:456.00px;font-size:18px;color:#b4b7bf;letter-spacing:0.750px;">Continu</span>
<div style="left:927px;top:487px;width:78px;height:32px;background:#232936;"></div>
<div style="left:927px;top:488px;width:78px;height:30px;background:#202531;"></div>
<span class="t" id="t47" style="left:848.7px;top:492.00px;font-size:18px;color:#b4b7bf;letter-spacing:0.300px;">Contact</span>
<div style="left:927px;top:523px;width:78px;height:32px;background:#232936;"></div>
<div style="left:927px;top:524px;width:78px;height:30px;background:#202531;"></div>
<span class="t" id="t48" style="left:848.7px;top:528.00px;font-size:18px;color:#b4b7bf;letter-spacing:0.300px;">Contact</span>
<div style="left:927px;top:559px;width:78px;height:32px;background:#232936;"></div>
<div style="left:927px;top:560px;width:78px;height:30px;background:#202531;"></div>
<span class="t" id="t49" style="left:848.7px;top:564.00px;font-size:18px;color:#b4b7bf;letter-spacing:0.557px;">Sleeping</span>
<div style="left:927px;top:595px;width:78px;height:32px;background:#232936;"></div>
<div style="left:927px;top:596px;width:78px;height:30px;background:#202531;"></div>
<span class="t" id="t50" style="left:848.7px;top:600.00px;font-size:18px;color:#b4b7bf;letter-spacing:0.171px;">Can Slee</span>
<div style="left:849px;top:627px;width:156px;height:4px;background:#333b4f;"></div>
<span class="t" id="t51" style="left:933px;top:240.00px;font-size:18px;color:#cdcfd4;letter-spacing:0.525px;">Rigid</span>
<span class="t" id="t52" style="left:942px;top:276.00px;font-size:18px;color:#cdcfd4;letter-spacing:0.300px;">1</span>
<span class="t" id="t53" style="left:943px;top:312.00px;font-size:18px;color:#cdcfd4;letter-spacing:-0.060px;">9.8</span>
<span class="t" id="t54" style="left:951.2px;top:348.00px;font-size:18px;color:#cdcfd4;letter-spacing:0.300px;">P</span>
<span class="t" id="t55" style="left:942px;top:384.00px;font-size:18px;color:#cdcfd4;letter-spacing:0.300px;">4</span>
<span class="t" id="t56" style="left:951.2px;top:420.00px;font-size:18px;color:#cdcfd4;letter-spacing:1.300px;">On</span>
<span class="t" id="t57" style="left:933px;top:456.00px;font-size:18px;color:#cdcfd4;letter-spacing:0.525px;">Disab</span>
<span class="t" id="t58" style="left:942.6px;top:492.00px;font-size:18px;color:#cdcfd4;letter-spacing:0.300px;">0</span>
<span class="t" id="t59" style="left:951.2px;top:528.00px;font-size:18px;color:#cdcfd4;letter-spacing:1.300px;">On</span>
<span class="t" id="t60" style="left:951.2px;top:564.00px;font-size:18px;color:#cdcfd4;letter-spacing:1.300px;">On</span>
<span class="t" id="t61" style="left:951.2px;top:600.00px;font-size:18px;color:#699ce8;letter-spacing:1.300px;">On</span>
<div style="left:1013px;top:207px;width:3px;height:166px;background:#5b5f6b;border-radius:2px;"></div>
<svg style="left:419px;top:24px;" width="17" height="17" viewBox="-0 -0 17 17"><path fill="#699ce8" d="M5 1L2 4.500h2V13h8.500v2L16 12l-3.500-3v2H6V4.500h2z" transform="translate(0 -.3)"/></svg>
<svg style="left:477px;top:24px;" width="17" height="17" viewBox="-0 -0 17 17"><path fill="#e0e0e0" d="M5 1L2 4.500h2V13h8.500v2L16 12l-3.500-3v2H6V4.500h2z" transform="translate(0 -.3)"/><path fill="#e0e0e0" d="M9 2h5v5h-1.800V5.100L7.400 9.900 6.100 8.600l4.800-4.800H9z" transform="translate(.8 .2)"/></svg>
<svg style="left:534px;top:24px;" width="17" height="17" viewBox="-0.7 -0 17 17"><path d="M6 1v1c-.55 0-1 .45-1 1v10H4v-2H1.5v2.2a1.8 1.8 0 0 0 1.8 1.8H10c1.100 0 2-.900 2-2V5h3V3c0-1.100-.900-2-2-2z" fill="#e0e0e0"/><path d="M6.500 1.500v12M12.500 2v3" stroke="#fff" stroke-opacity=".4" stroke-width="1" fill="none"/></svg>
<svg style="left:620px;top:24px;" width="17" height="17" viewBox="-0 -0 17 17"><path fill="#e0e0e0" d="M7 1v5.600L5.200 4.800 3.800 6.200 8 10.400l4.200-4.200-1.400-1.400L9 6.600V1zM1 9v4a2 2 0 0 0 2 2h10a2 2 0 0 0 2-2V9h-2v4H3V9z"/></svg>
<svg style="left:786px;top:24px;" width="17" height="17" viewBox="-0.5 -0 17 17"><path fill="#e0e0e0" d="M4 2.500v11a.5.500 0 0 0 .8.400l8.500-5.500a.5.500 0 0 0 0-.8L4.800 2.100A.5.500 0 0 0 4 2.500z"/></svg>
<svg style="left:819px;top:24px;" width="17" height="17" viewBox="-0 -0 17 17"><rect x="3" y="3" width="4" height="10" rx=".8" fill="#6e717c"/><rect x="9" y="3" width="4" height="10" rx=".8" fill="#6e717c"/></svg>
<svg style="left:851px;top:24px;" width="17" height="17" viewBox="-0 -0 17 17"><rect x="3" y="3" width="10" height="10" rx="1.500" fill="#6e717c"/></svg>
<svg style="left:886px;top:24px;" width="17" height="17" viewBox="-0.5 -0 17 17"><path fill-rule="evenodd" fill="#e0e0e0" d="M14.560 2l-2.240.330.820 1.900 1.710-.250zM10.340 2.620l-1.980.290.820 1.900 1.980-.290zM6.380 3.190l-1.980.290.820 1.900 1.980-.290zM2.420 3.770L1 3.980l.290 1.980 1.950-.290zM1 7v6c0 1.100.900 2 2 2h12V7zM6 9l5 2.500L6 14z"/></svg>
<svg style="left:918px;top:24px;" width="17" height="17" viewBox="-0.7 -0 17 17"><path fill-rule="evenodd" fill="#e0e0e0" d="M14.560 2l-2.240.330.820 1.900 1.710-.250zM10.340 2.620l-1.980.290.820 1.900 1.980-.290zM6.380 3.190l-1.980.290.820 1.900 1.980-.290zM2.420 3.770L1 3.980l.290 1.980 1.950-.290zM1 7v6c0 1.100.900 2 2 2h12V7zM4 9h3.500l1 1H13v4H4z"/></svg>
<svg style="left:1008px;top:23px;" width="17" height="17" viewBox="-0 -0.5 17 17"><path d="M3.500 6l4.500 4.500L12.500 6" fill="none" stroke="#b3588b" stroke-width="1.800"/></svg>
<svg style="left:29px;top:103px;" width="17" height="17" viewBox="-0 -0 17 17"><path d="M7 1v6H1v2h6v6h2V9h6V7H9V1z" fill="#e0e0e0"/></svg>
<svg style="left:61px;top:103px;" width="17" height="17" viewBox="-0 -0 17 17"><g fill="none" stroke="#e0e0e0" stroke-width="2" stroke-linecap="round"><path d="M7.2 4.6l1.4-1.4a3 3 0 0 1 4.2 4.2l-1.4 1.4"/><path d="M8.8 11.4l-1.4 1.4a3 3 0 0 1-4.2-4.2l1.4-1.4"/><path d="M5.9 10.1l4.2-4.2"/></g></svg>
<svg style="left:183px;top:103px;" width="17" height="17" viewBox="-0 -0 17 17"><path d="M6 1a5 5 0 1 0 2.65 9.23l3.85 3.85 1.5-1.5-3.85-3.85A5 5 0 0 0 6 1zm0 2a3 3 0 1 1 0 6 3 3 0 0 1 0-6z" fill="#d6d7da"/></svg>
<svg style="left:215px;top:103px;" width="17" height="17" viewBox="-0 -0 17 17"><path d="M6 1v1c-.55 0-1 .45-1 1v10H4v-2H1.5v2.2a1.8 1.8 0 0 0 1.8 1.8H8v-3h2V8h2V5h3V3c0-1.100-.900-2-2-2z" fill="#e0e0e0"/><path d="M6.500 1.500v12M12.500 2v3" stroke="#fff" stroke-opacity=".4" stroke-width="1" fill="none"/><path d="M11 9v2H9v2h2v2h2v-2h2v-2h-2V9z" fill="#84ffb1"/></svg>
<svg style="left:231px;top:65px;" width="17" height="17" viewBox="-0 -0 17 17"><circle cx="8" cy="2" r="2" fill="#797c87"/><circle cx="8" cy="8" r="2" fill="#797c87"/><circle cx="8" cy="14" r="2" fill="#797c87"/></svg>
<svg style="left:231px;top:399px;" width="17" height="17" viewBox="-0 -0 17 17"><circle cx="8" cy="2" r="2" fill="#797c87"/><circle cx="8" cy="8" r="2" fill="#797c87"/><circle cx="8" cy="14" r="2" fill="#797c87"/></svg>
<svg style="left:1015px;top:65px;" width="17" height="17" viewBox="-0 -0 17 17"><circle cx="8" cy="2" r="2" fill="#a4a6ae"/><circle cx="8" cy="8" r="2" fill="#a4a6ae"/><circle cx="8" cy="14" r="2" fill="#a4a6ae"/></svg>
<svg style="left:36px;top:149px;" width="17" height="17" viewBox="-0.8 -0.2 17 17"><path d="M6 4.500l3.500 3.500-3.500 3.500" fill="none" stroke="#676b79" stroke-width="1.800" stroke-linecap="round" stroke-linejoin="round"/></svg>
<svg style="left:51px;top:149px;" width="17" height="17" viewBox="-0 -0.3 17 17"><circle cx="8" cy="8" r="5" fill="none" stroke="#e0e0e0" stroke-width="2"/></svg>
<svg style="left:51px;top:181px;" width="17" height="17" viewBox="-0 -0 17 17"><path fill-rule="evenodd" fill="#a5b7f3" d="M8 1a7 7 0 1 0 0 14A7 7 0 0 0 8 1z M7 7.7h6.95A6 6 0 0 0 10.2 2.4z M2.1 5.3a.8 1.3 20 0 0 1 2.2a.8 1.3 20 0 0-1-2.2z M3.2 10.3L5.9 10l3.8 3.7A6 6 0 0 1 3.2 10.3z"/></svg>
<svg style="left:177px;top:176px;" width="17" height="17" viewBox="-0 -0.9 17 17"><path fill="#e0e0e0" d="M14.56 2l-2.24.33.82 1.9 1.71-.25zM10.34 2.62l-1.98.29.82 1.9 1.98-.29zM6.38 3.19l-1.98.29.82 1.9 1.98-.29zM2.42 3.77L1 3.98l.29 1.98 1.95-.29zM1 7v6c0 1.1.9 2 2 2h12V7zM5 9h6l-3 4z"/></svg>
<svg style="left:201px;top:177px;" width="17" height="17" viewBox="-0 -0 17 17"><path fill-rule="evenodd" fill="#e0e0e0" d="M.800 8C2.600 4 5.200 2 8 2s5.400 2 7.200 6C13.400 12 10.800 14 8 14S2.600 12 .800 8zM8 4a4 4 0 1 0 0 8 4 4 0 0 0 0-8zm0 2a2 2 0 1 1 0 4 2 2 0 0 1 0-4z"/></svg>
<svg style="left:51px;top:213px;" width="17" height="17" viewBox="-0 -0 17 17"><path fill-rule="evenodd" fill="#a5b7f3" d="M8 1a7 7 0 1 0 0 14A7 7 0 0 0 8 1z M7 7.7h6.95A6 6 0 0 0 10.2 2.4z M2.1 5.3a.8 1.3 20 0 0 1 2.2a.8 1.3 20 0 0-1-2.2z M3.2 10.3L5.9 10l3.8 3.7A6 6 0 0 1 3.2 10.3z"/></svg>
<svg style="left:177px;top:208px;" width="17" height="17" viewBox="-0 -0.9 17 17"><path fill="#e0e0e0" d="M14.56 2l-2.24.33.82 1.9 1.71-.25zM10.34 2.62l-1.98.29.82 1.9 1.98-.29zM6.38 3.19l-1.98.29.82 1.9 1.98-.29zM2.42 3.77L1 3.98l.29 1.98 1.95-.29zM1 7v6c0 1.1.9 2 2 2h12V7zM5 9h6l-3 4z"/></svg>
<svg style="left:201px;top:209px;" width="17" height="17" viewBox="-0 -0 17 17"><path fill-rule="evenodd" fill="#e0e0e0" d="M.800 8C2.600 4 5.200 2 8 2s5.400 2 7.200 6C13.400 12 10.800 14 8 14S2.600 12 .800 8zM8 4a4 4 0 1 0 0 8 4 4 0 0 0 0-8zm0 2a2 2 0 1 1 0 4 2 2 0 0 1 0-4z"/></svg>
<svg style="left:51px;top:245px;" width="17" height="17" viewBox="-0 -0 17 17"><path fill-rule="evenodd" fill="#a5b7f3" d="M8 1a7 7 0 1 0 0 14A7 7 0 0 0 8 1z M7 7.7h6.95A6 6 0 0 0 10.2 2.4z M2.1 5.3a.8 1.3 20 0 0 1 2.2a.8 1.3 20 0 0-1-2.2z M3.2 10.3L5.9 10l3.8 3.7A6 6 0 0 1 3.2 10.3z"/></svg>
<svg style="left:177px;top:240px;" width="17" height="17" viewBox="-0 -0.9 17 17"><path fill="#e0e0e0" d="M14.56 2l-2.24.33.82 1.9 1.71-.25zM10.34 2.62l-1.98.29.82 1.9 1.98-.29zM6.38 3.19l-1.98.29.82 1.9 1.98-.29zM2.42 3.77L1 3.98l.29 1.98 1.95-.29zM1 7v6c0 1.1.9 2 2 2h12V7zM5 9h6l-3 4z"/></svg>
<svg style="left:201px;top:241px;" width="17" height="17" viewBox="-0 -0 17 17"><path fill-rule="evenodd" fill="#e0e0e0" d="M.800 8C2.600 4 5.200 2 8 2s5.400 2 7.200 6C13.400 12 10.800 14 8 14S2.600 12 .800 8zM8 4a4 4 0 1 0 0 8 4 4 0 0 0 0-8zm0 2a2 2 0 1 1 0 4 2 2 0 0 1 0-4z"/></svg>
<svg style="left:51px;top:277px;" width="17" height="17" viewBox="-0 -0 17 17"><path fill-rule="evenodd" fill="#a5b7f3" d="M8 1a7 7 0 1 0 0 14A7 7 0 0 0 8 1z M7 7.7h6.95A6 6 0 0 0 10.2 2.4z M2.1 5.3a.8 1.3 20 0 0 1 2.2a.8 1.3 20 0 0-1-2.2z M3.2 10.3L5.9 10l3.8 3.7A6 6 0 0 1 3.2 10.3z"/></svg>
<svg style="left:177px;top:272px;" width="17" height="17" viewBox="-0 -0.9 17 17"><path fill="#e0e0e0" d="M14.56 2l-2.24.33.82 1.9 1.71-.25zM10.34 2.62l-1.98.29.82 1.9 1.98-.29zM6.38 3.19l-1.98.29.82 1.9 1.98-.29zM2.42 3.77L1 3.98l.29 1.98 1.95-.29zM1 7v6c0 1.1.9 2 2 2h12V7zM5 9h6l-3 4z"/></svg>
<svg style="left:201px;top:273px;" width="17" height="17" viewBox="-0 -0 17 17"><path fill-rule="evenodd" fill="#e0e0e0" d="M.800 8C2.600 4 5.200 2 8 2s5.400 2 7.200 6C13.400 12 10.800 14 8 14S2.600 12 .800 8zM8 4a4 4 0 1 0 0 8 4 4 0 0 0 0-8zm0 2a2 2 0 1 1 0 4 2 2 0 0 1 0-4z"/></svg>
<svg style="left:51px;top:309px;" width="17" height="17" viewBox="-0 -0 17 17"><path fill-rule="evenodd" fill="#a5b7f3" d="M8 1a7 7 0 1 0 0 14A7 7 0 0 0 8 1z M7 7.7h6.95A6 6 0 0 0 10.2 2.4z M2.1 5.3a.8 1.3 20 0 0 1 2.2a.8 1.3 20 0 0-1-2.2z M3.2 10.3L5.9 10l3.8 3.7A6 6 0 0 1 3.2 10.3z"/></svg>
<svg style="left:177px;top:304px;" width="17" height="17" viewBox="-0 -0.9 17 17"><path fill="#e0e0e0" d="M14.56 2l-2.24.33.82 1.9 1.71-.25zM10.34 2.62l-1.98.29.82 1.9 1.98-.29zM6.38 3.19l-1.98.29.82 1.9 1.98-.29zM2.42 3.77L1 3.98l.29 1.98 1.95-.29zM1 7v6c0 1.1.9 2 2 2h12V7zM5 9h6l-3 4z"/></svg>
<svg style="left:201px;top:305px;" width="17" height="17" viewBox="-0 -0 17 17"><path fill-rule="evenodd" fill="#e0e0e0" d="M.800 8C2.600 4 5.200 2 8 2s5.400 2 7.200 6C13.400 12 10.800 14 8 14S2.600 12 .800 8zM8 4a4 4 0 1 0 0 8 4 4 0 0 0 0-8zm0 2a2 2 0 1 1 0 4 2 2 0 0 1 0-4z"/></svg>
<svg style="left:51px;top:341px;" width="17" height="17" viewBox="-0 -0 17 17"><path fill-rule="evenodd" fill="#a5b7f3" d="M8 1a7 7 0 1 0 0 14A7 7 0 0 0 8 1z M7 7.7h6.95A6 6 0 0 0 10.2 2.4z M2.1 5.3a.8 1.3 20 0 0 1 2.2a.8 1.3 20 0 0-1-2.2z M3.2 10.3L5.9 10l3.8 3.7A6 6 0 0 1 3.2 10.3z"/></svg>
<svg style="left:177px;top:336px;" width="17" height="17" viewBox="-0 -0.9 17 17"><path fill="#e0e0e0" d="M14.56 2l-2.24.33.82 1.9 1.71-.25zM10.34 2.62l-1.98.29.82 1.9 1.98-.29zM6.38 3.19l-1.98.29.82 1.9 1.98-.29zM2.42 3.77L1 3.98l.29 1.98 1.95-.29zM1 7v6c0 1.1.9 2 2 2h12V7zM5 9h6l-3 4z"/></svg>
<svg style="left:201px;top:337px;" width="17" height="17" viewBox="-0 -0 17 17"><path fill-rule="evenodd" fill="#e0e0e0" d="M.800 8C2.600 4 5.200 2 8 2s5.400 2 7.200 6C13.400 12 10.800 14 8 14S2.600 12 .800 8zM8 4a4 4 0 1 0 0 8 4 4 0 0 0 0-8zm0 2a2 2 0 1 1 0 4 2 2 0 0 1 0-4z"/></svg>
<svg style="left:25px;top:437px;" width="17" height="17" viewBox="-0 -0 17 17"><path d="M10.500 1.300L5.300 8l5.200 6.700" fill="none" stroke="#6c7080" stroke-width="1.800"/></svg>
<svg style="left:45px;top:437px;" width="17" height="17" viewBox="-0 -0 17 17"><path d="M5.500 1.300L10.700 8l-5.200 6.700" fill="none" stroke="#6c7080" stroke-width="1.800"/></svg>
<svg style="left:215px;top:437px;" width="17" height="17" viewBox="-0 -0 17 17"><path fill="#e0e0e0" d="M0 2h16v7H0zM0 11h16v7H0z" transform="translate(0 -2)"/></svg>
<svg style="left:215px;top:473px;" width="17" height="17" viewBox="-0 -0 17 17"><path d="M6 1a5 5 0 1 0 2.65 9.23l3.85 3.85 1.5-1.5-3.85-3.85A5 5 0 0 0 6 1zm0 2a3 3 0 1 1 0 6 3 3 0 0 1 0-6z" fill="#d6d7da"/></svg>
<svg style="left:39px;top:513px;" width="17" height="17" viewBox="-0 -0.5 17 17"><path fill="#e0e0e0" d="M8 1.7l1.95 4.3 4.7.5-3.5 3.2 1 4.6L8 11.9l-4.150 2.400 1-4.600-3.500-3.200 4.700-.500z"/></svg>
<svg style="left:25px;top:545px;" width="17" height="17" viewBox="-0 -0.5 17 17"><path d="M4.500 6.300l3.500 3.500 3.500-3.500" fill="none" stroke="#676b79" stroke-width="1.800" stroke-linecap="round" stroke-linejoin="round"/></svg>
<svg style="left:39px;top:545px;" width="17" height="17" viewBox="-0 -0.4 17 17"><path fill="#88a5dc" d="M2 2a1 1 0 0 0-1 1v10a1 1 0 0 0 1 1h12a1 1 0 0 0 1-1V5a1 1 0 0 0-1-1H9A1 1 0 0 1 8 3a1 1 0 0 0-1-1z"/></svg>
<svg style="left:36px;top:577px;" width="17" height="17" viewBox="-0.8 -0 17 17"><path d="M6 4.500l3.500 3.500-3.500 3.500" fill="none" stroke="#676b79" stroke-width="1.800" stroke-linecap="round" stroke-linejoin="round"/></svg>
<svg style="left:51px;top:577px;" width="17" height="17" viewBox="-0 -0.4 17 17"><path fill="#88a5dc" d="M2 2a1 1 0 0 0-1 1v10a1 1 0 0 0 1 1h12a1 1 0 0 0 1-1V5a1 1 0 0 0-1-1H9A1 1 0 0 1 8 3a1 1 0 0 0-1-1z"/></svg>
<svg style="left:51px;top:609px;" width="17" height="17" viewBox="-0 -0.5 17 17"><path fill="#e0e0e0" d="M14.56 2l-2.24.33.82 1.9 1.71-.25zM10.34 2.62l-1.98.29.82 1.9 1.98-.29zM6.38 3.19l-1.98.29.82 1.9 1.98-.29zM2.42 3.77L1 3.98l.29 1.98 1.95-.29zM1 7v6c0 1.1.9 2 2 2h12V7z"/></svg>
<svg style="left:260px;top:65px;" width="17" height="17" viewBox="-0 -0 17 17"><circle cx="8" cy="8" r="5" fill="none" stroke="#e0e0e0" stroke-width="2"/></svg>
<svg style="left:351px;top:65px;" width="17" height="17" viewBox="-0.8 -0.4 17 17"><path d="M3 3.300l10 9.400M13 3.300l-10 9.400" fill="none" stroke="#e6e6e6" stroke-width="2.2"/></svg>
<svg style="left:380px;top:64px;" width="17" height="17" viewBox="-0.8 -0.5 17 17"><path d="M7.2 1v6.2H1v1.6h6.2V15h1.6V8.8H15V7.2H8.8V1z" fill="#6e7280"/></svg>
<svg style="left:258px;top:102px;" width="17" height="17" viewBox="-0 -0 17 17"><path fill="#699ce8" d="M2 2l3.6 11.800 1.900-3.900 3.700 3.700 2.400-2.400-3.700-3.700 3.900-1.900z"/></svg>
<svg style="left:298px;top:102px;" width="17" height="17" viewBox="-0 -0 17 17"><path fill="none" stroke="#e0e0e0" stroke-width="2" stroke-linejoin="miter" d="M5.300 4.200L8 1.900l2.700 2.300M5.300 11.800L8 14.100l2.700-2.300M4.200 5.300L1.900 8l2.300 2.700M11.800 5.300L14.100 8l-2.300 2.700"/><circle cx="8" cy="8" r="2.100" fill="#e0e0e0"/></svg>
<svg style="left:330px;top:102px;" width="17" height="17" viewBox="-0 -0 17 17"><path fill="none" stroke="#e0e0e0" stroke-width="1.900" d="M2.400 10.200A6 6 0 1 1 13.200 11"/><path fill="#e0e0e0" d="M1.500 10.600v4.600h5z"/><circle cx="8" cy="8" r="2" fill="#e0e0e0"/></svg>
<svg style="left:362px;top:102px;" width="17" height="17" viewBox="-0 -0 17 17"><path fill="#e0e0e0" d="M9 1v2h2.600L9.800 4.800l1.400 1.400L13 4.400V7h2V1zM4.800 9.800L3 11.600V9H1v6h6v-2H4.400l1.800-1.800z"/><circle cx="8" cy="8" r="2" fill="#e0e0e0"/></svg>
<svg style="left:401px;top:102px;" width="17" height="17" viewBox="-0.7 -0 17 17"><path fill-rule="evenodd" fill="#e0e0e0" d="M1 1h11.500v6H3v6h5v2H1zM3 3v2h7.500V3z"/><path fill="#e0e0e0" d="M8.500 7.500l2 8 1.500-2.500 2.500 2.500 1.500-1.500-2.500-2.500 2.500-1.500z"/></svg>
<svg style="left:434px;top:102px;" width="17" height="17" viewBox="-0 -0 17 17"><path fill="#6c7080" d="M6 0h2v4H6zM0 6h4v2H0zM10 6h4v2h-4zM6 10h1.500v4H6z" opacity=".8"/><path fill="#6c7080" d="M8.500 7.500l2 8 1.500-2.500 2.500 2.500 1.500-1.500-2.500-2.500 2.500-1.500z"/></svg>
<svg style="left:466px;top:102px;" width="17" height="17" viewBox="-0 -0 17 17"><g transform="translate(1 0) scale(.88 1)"><path fill="#e0e0e0" d="M8 1a1 1 0 0 0-1 1v6H6V3a1 1 0 0 0-2 0v7.500L2.700 9.100a1.200 1.200 0 0 0-1.900 1.500l3.200 4.100c.4.500 1 .8 1.600.800H11a3 3 0 0 0 3-3V4a1 1 0 0 0-2 0v4h-1V2a1 1 0 0 0-2 0v6H9V2a1 1 0 0 0-1-1z"/></g></svg>
<svg style="left:497px;top:102px;" width="17" height="17" viewBox="-0.6 -0.4 17 17"><path fill-rule="evenodd" fill="#e0e0e0" d="M1 1v14h14zM3.500 7l5.500 5.500H3.500z"/></svg>
<svg style="left:539px;top:102px;" width="17" height="17" viewBox="-0.7 -0.4 17 17"><path fill="#e0e0e0" d="M1 2h2v2H1zM7 2h2v2H7zM1 8h2v2H1z"/><path fill="none" stroke="#e0e0e0" stroke-width="2" d="M6 15v-4a3.500 3.500 0 0 1 7 0v4"/><path fill="#fff" d="M5 13h2v2H5zM12 13h2v2h-2z"/></svg>
<svg style="left:569px;top:102px;" width="17" height="17" viewBox="-0.8 -0 17 17"><path fill="#e0e0e0" d="M3 0h2v3h6V0h2v3h2v2H5v4h2v2H5v4H3v-4H0V9h3V5H0V3h3z"/><path fill="none" stroke="#e0e0e0" stroke-width="2" d="M8 15v-3.500a3 3 0 0 1 6 0V15"/><path fill="#fff" d="M7 13h2v2H7zM13 13h2v2h-2z"/></svg>
<svg style="left:597px;top:102px;" width="17" height="17" viewBox="-0 -0 17 17"><circle cx="8" cy="2" r="2" fill="#6c7080"/><circle cx="8" cy="8" r="2" fill="#6c7080"/><circle cx="8" cy="14" r="2" fill="#6c7080"/></svg>
<svg style="left:632px;top:102px;" width="17" height="17" viewBox="-0 -0.3 17 17"><path fill-rule="evenodd" fill="#e0e0e0" d="M8 1a5 5 0 0 0-5 5v1H2v8h12V7h-1V6a5 5 0 0 0-5-5zm0 2a3 3 0 0 1 3 3v1H5V6a3 3 0 0 1 3-3zM7 10h2v3H7z"/></svg>
<svg style="left:664px;top:102px;" width="17" height="17" viewBox="-0 -0 17 17"><path fill="#fff" d="M1 1h2v2H1zM13 1h2v2h-2zM1 13h2v2H1zM13 13h2v2h-2z"/><path fill-rule="evenodd" fill="#b9bcc8" fill-opacity=".55" d="M7 1v6H1.500v8H9V9h6V1zM9 3h4v4H9z"/></svg>
<svg style="left:704px;top:102px;" width="17" height="17" viewBox="-0 -0 17 17"><path fill="#e0e0e0" d="M10.480 1a2.500 2.500 0 0 0-2.270 3.510L4.510 8.210a2.500 2.500 0 1 0-1.270 4.280 2.500 2.500 0 1 0 4.280-1.270l3.700-3.700a2.500 2.500 0 1 0 1.270-4.280A2.500 2.500 0 0 0 10.480 1z" transform="translate(.4 .6)"/></svg>
<svg style="left:743px;top:101px;" width="17" height="17" viewBox="-0.5 -0.5 17 17"><circle cx="9.600" cy="4" r="3" fill="#5d6b96"/><circle cx="4.300" cy="5.500" r="2.300" fill="#5d6b96"/><path fill="#5d6b96" d="M2 8.500a1.500 1.500 0 0 1 1.500-1.500h6.500a1.500 1.500 0 0 1 1.500 1.500v.8l3-1.800v6l-3-1.800v.3a1.500 1.500 0 0 1-1.500 1.500H3.500A1.500 1.500 0 0 1 2 12z"/></svg>
<svg style="left:810px;top:65px;" width="17" height="17" viewBox="-0 -0 17 17"><path fill="#e0e0e0" d="M1 1v4.500l1.500-1.500 2.600 2.600 1.500-1.500L4 2.500 5.500 1zM15 1h-4.500L12 2.500 9.400 5.100l1.500 1.500L13.500 4 15 5.500zM1 15h4.500L4 13.500l2.600-2.600-1.500-1.500L2.500 12 1 10.500zM15 15v-4.500L13.500 12l-2.600-2.600-1.500 1.500 2.600 2.600-1.500 1.500z"/></svg>
<svg style="left:851px;top:103px;" width="17" height="17" viewBox="-0.5 -0 17 17"><path fill="#e0e0e0" d="M1.500 1v14h6.500v-3h2V9h3V6.500H8.500V1zM9.500 1v4.500h4z"/><path d="M11 9v2H9v2h2v2h2v-2h2v-2h-2V9z" fill="#84ffb1"/></svg>
<svg style="left:883px;top:103px;" width="17" height="17" viewBox="-0 -0.5 17 17"><path fill="#e0e0e0" d="M2 2a1 1 0 0 0-1 1v11l2.200-7.300A1 1 0 0 1 4.200 6H13V5a1 1 0 0 0-1-1H8.500a1 1 0 0 1-1-1 1 1 0 0 0-1-1z"/><path fill="#e0e0e0" d="M4.500 7a.8.800 0 0 0-.8.600L1.500 15H12a1 1 0 0 0 1-.700l2-6.300a.8.800 0 0 0-.8-1z"/></svg>
<svg style="left:915px;top:103px;" width="17" height="17" viewBox="-0 -0 17 17"><path fill-rule="evenodd" fill="#6c7080" d="M3 1a2 2 0 0 0-2 2v10a2 2 0 0 0 2 2h10a2 2 0 0 0 2-2V4l-3-3h-1v5H4V1zM5 1v4h2V1zM8 8.500a2 2 0 1 1 0 4 2 2 0 0 1 0-4z"/></svg>
<svg style="left:947px;top:103px;" width="17" height="17" viewBox="-0 -0 17 17"><path d="M10.500 1.300L5.300 8l5.200 6.700" fill="none" stroke="#e0e0e0" stroke-width="1.800"/></svg>
<svg style="left:971px;top:103px;" width="17" height="17" viewBox="-0 -0 17 17"><path d="M5.500 1.300L10.700 8l-5.200 6.700" fill="none" stroke="#6c7080" stroke-width="1.800"/></svg>
<svg style="left:999px;top:103px;" width="17" height="17" viewBox="-0 -0 17 17"><path fill="none" stroke="#e0e0e0" stroke-width="1.900" d="M3.200 8.300A5.300 5.300 0 1 1 4.800 12.100"/><path fill="#e0e0e0" d="M.300 7.200h5.800L3.200 11z"/><path fill="none" stroke="#e0e0e0" stroke-width="1.600" d="M8.600 5v3.700h2.900"/></svg>
<svg style="left:851px;top:139px;" width="17" height="17" viewBox="-0 -0.2 17 17"><path fill-rule="evenodd" fill="#a5b7f3" d="M8 1a7 7 0 1 0 0 14A7 7 0 0 0 8 1z M7 7.7h6.95A6 6 0 0 0 10.2 2.4z M2.1 5.3a.8 1.3 20 0 0 1 2.2a.8 1.3 20 0 0-1-2.2z M3.2 10.3L5.9 10l3.8 3.7A6 6 0 0 1 3.2 10.3z"/></svg>
<svg style="left:999px;top:139px;" width="17" height="17" viewBox="-0 -0 17 17"><path fill="#e0e0e0" d="M3.500 1h1.500v6.500c.9.300 1.500 1 1.500 2V13a2.250 2.250 0 0 1-4.500 0V9.500c0-1 .6-1.700 1.500-2zM8 1h2.300v2.800h1.900V1h2.300v3c0 1.200-.9 2-2.200 2.300V15h-2V6.300C9 6 8 5.200 8 4z"/></svg>
<svg style="left:999px;top:175px;" width="17" height="17" viewBox="-0 -0.3 17 17"><path d="M6 1a5 5 0 1 0 2.65 9.23l3.85 3.85 1.5-1.5-3.85-3.85A5 5 0 0 0 6 1zm0 2a3 3 0 1 1 0 6 3 3 0 0 1 0-6z" fill="#d6d7da"/></svg>
<svg style="left:862px;top:213px;" width="17" height="17" viewBox="-0 -0.2 17 17"><path fill-rule="evenodd" fill="#a5b7f3" d="M8 1a7 7 0 1 0 0 14A7 7 0 0 0 8 1z M7 7.7h6.95A6 6 0 0 0 10.2 2.4z M2.1 5.3a.8 1.3 20 0 0 1 2.2a.8 1.3 20 0 0-1-2.2z M3.2 10.3L5.9 10l3.8 3.7A6 6 0 0 1 3.2 10.3z"/></svg>
<svg style="left:987px;top:243px;" width="17" height="17" viewBox="-0 -0 17 17"><path d="M3.500 6l4.500 4.500L12.500 6" fill="none" stroke="#e0e0e0" stroke-width="1.800"/></svg>
<svg style="left:933px;top:351px;" width="17" height="17" viewBox="-0 -0 17 17"><path fill-rule="evenodd" fill="#e0e0e0" d="M8 .9L1 4.400v7.700l7 3.500 7-3.500V4.400zM8 3.100l3.800 1.900L8 6.900 4.200 5zM3 6.600l4 2v4.800l-4-2z"/></svg>
<svg style="left:984px;top:352px;" width="17" height="17" viewBox="-0 -0.5 17 17"><path d="M4.500 6.500L8 10l3.500-3.500" fill="none" stroke="#e0e0e0" stroke-width="1.800"/></svg>
<svg style="left:931px;top:423px;" width="17" height="17" viewBox="-0 -0 17 17"><rect x="1" y="1" width="14" height="14" rx="2.500" fill="#42454f"/></svg>
<svg style="left:987px;top:459px;" width="17" height="17" viewBox="-0 -0.5 17 17"><path d="M3.500 6l4.500 4.500L12.500 6" fill="none" stroke="#e0e0e0" stroke-width="1.800"/></svg>
<svg style="left:983px;top:495px;" width="17" height="17" viewBox="-0 -0 17 17"><path d="M3.500 6.500L8 2l4.500 4.500M3.500 10.500L8 15l4.500-4.500" fill="none" stroke="#e0e0e0" stroke-width="1.800" transform="translate(0 -.5)"/></svg>
<svg style="left:931px;top:531px;" width="17" height="17" viewBox="-0 -0 17 17"><rect x="1" y="1" width="14" height="14" rx="2.500" fill="#42454f"/></svg>
<svg style="left:931px;top:567px;" width="17" height="17" viewBox="-0 -0 17 17"><rect x="1" y="1" width="14" height="14" rx="2.500" fill="#42454f"/></svg>
<svg style="left:931px;top:603px;" width="17" height="17" viewBox="-0 -0 17 17"><rect x="1" y="1" width="14" height="14" rx="2.500" fill="#474a54"/><path d="M3.800 8.600l2.900 2.700 5.600-6.300" fill="none" stroke="#fff" stroke-width="2.100"/></svg>
<div style="left:933px;top:298px;width:62px;height:2px;background:#474b59;"></div>
<div style="left:951px;top:297px;width:4px;height:3px;background:#d8d8d8;"></div>
<div style="left:933px;top:334px;width:62px;height:2px;background:#474b59;"></div>
<div style="left:960px;top:333px;width:4px;height:3px;background:#d8d8d8;"></div>
<div style="left:933px;top:406px;width:62px;height:2px;background:#474b59;"></div>
<div style="left:964px;top:405px;width:4px;height:3px;background:#d8d8d8;"></div>
</div>
</body></html>
